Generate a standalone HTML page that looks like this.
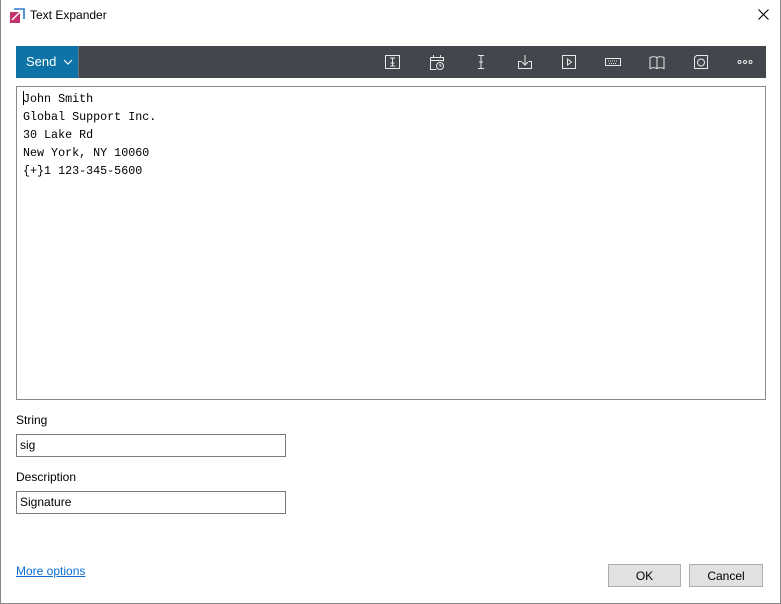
<!DOCTYPE html>
<html><head><style>
*{margin:0;padding:0;box-sizing:border-box}
body{width:781px;height:604px;background:#fff;position:relative;overflow:hidden;font-family:"Segoe UI","Liberation Sans",sans-serif;font-size:12px;color:#000}
.frame{position:absolute;left:0;top:0;width:781px;height:604px;border:1px solid #888;border-top:none}
.abs{position:absolute}
.tb{left:16px;top:46px;width:750px;height:32px;background:#41474d}
.send{left:16px;top:46px;width:62px;height:32px;background:#0e74a8;color:#fff;font-size:13px;line-height:31px;padding-left:10px}
.ed{left:16px;top:86px;width:750px;height:314px;border:1px solid #8a8a8a;font-family:"Liberation Mono",monospace;font-size:11.7px;line-height:18px;padding:3px 0 0 6px;white-space:pre}
.inp{left:16px;width:270px;height:23px;border:1px solid #7a7a7a;padding:3px 0 0 3px;font-size:12px}
.lbl{left:16px;font-size:12px}
.btn{top:564px;height:23px;background:#e1e1e1;border:1px solid #adadad;text-align:center;line-height:22px;font-size:12px}
svg.i{position:absolute;top:53px}
</style></head><body>
<div class="frame"></div>
<svg class="abs" style="left:9px;top:8px" width="16" height="16"><path d="M1 4h10v11H1z" fill="#c2336e"/><path d="M5 1h10v10" fill="none" stroke="#2a7ad2" stroke-width="1.6"/><path d="M3 12L13 2" stroke="#fff" stroke-width="1.4"/></svg>
<div class="abs" style="left:30px;top:8px;font-size:12px">Text Expander</div>
<svg class="abs" style="left:758px;top:9px" width="11" height="11"><path d="M0.5 0.5l10 10M10.5 0.5l-10 10" stroke="#000" stroke-width="1.1"/></svg>
<div class="abs tb"></div>
<div class="abs send">Send <svg width="10" height="8" style="margin-left:3px"><path d="M1 2l4 4 4-4" fill="none" stroke="#fff" stroke-width="1.2"/></svg></div>
<div class="abs" style="left:78px;top:46px;width:1px;height:32px;background:#6a7177"></div>
<svg class="i" style="left:384px" width="18" height="18" fill="none" stroke="#e8e8e8" stroke-width="1"><rect x="1.5" y="2.5" width="14" height="13"/><path d="M6 5h5M6 13h5M8.5 5v8M6.5 10h4"/></svg>
<svg class="i" style="left:428px" width="18" height="18" fill="none" stroke="#e8e8e8"><path d="M2.5 4.5h13v4M2.5 4.5v12h6M5.5 2v3M12.5 2v3M2.5 7.5h13"/><circle cx="12" cy="13" r="3.5"/><path d="M12 11v2h1.5"/></svg>
<svg class="i" style="left:472px" width="18" height="18" fill="none" stroke="#e8e8e8"><path d="M6 2.5h6M6 15.5h6M9 2.5v13M7 9h4"/></svg>
<svg class="i" style="left:516px" width="18" height="18" fill="none" stroke="#e8e8e8"><path d="M5.5 8.5h-3v7h13v-7h-3M9 2v10M6 9l3 3 3-3"/></svg>
<svg class="i" style="left:560px" width="18" height="18" fill="none" stroke="#e8e8e8"><rect x="2.5" y="2.5" width="13" height="13"/><path d="M7.5 6v6l4-3z"/></svg>
<svg class="i" style="left:604px" width="18" height="18" fill="none" stroke="#e8e8e8"><rect x="1.5" y="5.5" width="15" height="7"/><path d="M4 8h10M5 10.5h8" stroke-dasharray="1 1"/></svg>
<svg class="i" style="left:648px" width="18" height="18" fill="none" stroke="#e8e8e8"><path d="M9 4.5v11M9 4.5c-2-1-5-1-7 0v11c2-1 5-1 7 0 2-1 5-1 7 0v-11c-2-1-5-1-7 0"/></svg>
<svg class="i" style="left:692px" width="18" height="18" fill="none" stroke="#e8e8e8"><path d="M4.5 2.5h11v13h-13v-11z"/><circle cx="9" cy="9.5" r="3.5"/></svg>
<svg class="i" style="left:736px" width="18" height="18" fill="none" stroke="#e8e8e8"><circle cx="3.5" cy="9" r="1.5"/><circle cx="9" cy="9" r="1.5"/><circle cx="14.5" cy="9" r="1.5"/></svg>
<div class="abs ed">John Smith
Global Support Inc.
30 Lake Rd
New York, NY 10060
{+}1 123-345-5600</div>
<div class="abs" style="left:23px;top:91px;width:1px;height:14px;background:#000"></div>
<div class="abs lbl" style="top:413px">String</div>
<div class="abs inp" style="top:434px">sig</div>
<div class="abs lbl" style="top:470px">Description</div>
<div class="abs inp" style="top:491px">Signature</div>
<div class="abs" style="left:16px;top:564px;color:#0a6fd0;text-decoration:underline">More options</div>
<div class="abs btn" style="left:608px;width:73px">OK</div>
<div class="abs btn" style="left:689px;width:74px">Cancel</div>
</body></html>
